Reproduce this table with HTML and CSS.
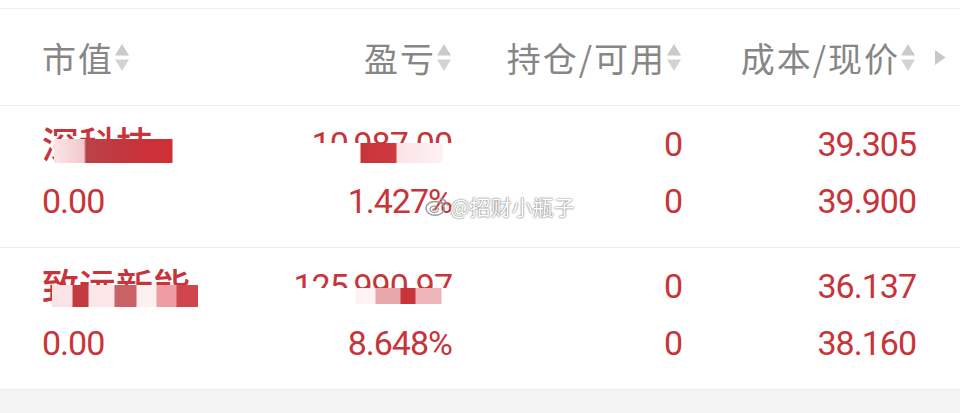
FILE: index.html
```html
<!DOCTYPE html>
<html lang="zh-CN">
<head>
    <meta charset="UTF-8">
    <meta name="viewport" content="width=device-width, initial-scale=1.0">
    <title>持仓</title>
    <link rel="stylesheet" href="styles.css">
</head>
<body>
    <div class="topbar"></div>
    <div class="holdings">
        <div class="row head">
            <div class="cell left"><span class="label">市值</span><svg class="sort" viewBox="0 0 16 29"><path d="M8 1 L15 12.5 L1 12.5 Z" fill="#cacaca"/><path d="M1 16.5 L15 16.5 L8 28 Z" fill="#d3d3d3"/></svg></div>
            <div class="cell"><span class="label">盈亏</span><svg class="sort" viewBox="0 0 16 29"><path d="M8 1 L15 12.5 L1 12.5 Z" fill="#cacaca"/><path d="M1 16.5 L15 16.5 L8 28 Z" fill="#d3d3d3"/></svg></div>
            <div class="cell"><span class="label">持仓/可用</span><svg class="sort" viewBox="0 0 16 29"><path d="M8 1 L15 12.5 L1 12.5 Z" fill="#cacaca"/><path d="M1 16.5 L15 16.5 L8 28 Z" fill="#d3d3d3"/></svg></div>
            <div class="cell"><span class="label">成本/现价</span><svg class="sort" viewBox="0 0 16 29"><path d="M8 1 L15 12.5 L1 12.5 Z" fill="#cacaca"/><path d="M1 16.5 L15 16.5 L8 28 Z" fill="#d3d3d3"/></svg></div>
            <div class="cell more"><svg viewBox="0 0 12 17"><path d="M1 1 L11.5 8.5 L1 16 Z" fill="#c8c8c8"/></svg></div>
        </div>

        <div class="row stock">
            <div class="cell left">
                <span class="name">深科技<span class="mask m1"></span></span>
                <span class="num">0.00</span>
            </div>
            <div class="cell">
                <span class="num">10,987.00<span class="mask m2"></span></span>
                <span class="num">1.427%</span>
            </div>
            <div class="cell">
                <span class="num">0</span>
                <span class="num">0</span>
            </div>
            <div class="cell">
                <span class="num">39.305</span>
                <span class="num">39.900</span>
            </div>
            <div class="cell"></div>
        </div>

        <div class="row stock">
            <div class="cell left">
                <span class="name">致远新能<span class="mask m3"></span></span>
                <span class="num">0.00</span>
            </div>
            <div class="cell">
                <span class="num">125,990.97<span class="mask m4"></span></span>
                <span class="num">8.648%</span>
            </div>
            <div class="cell">
                <span class="num">0</span>
                <span class="num">0</span>
            </div>
            <div class="cell">
                <span class="num">36.137</span>
                <span class="num">38.160</span>
            </div>
            <div class="cell"></div>
        </div>

        <div class="watermark">
            <svg class="weibo" viewBox="0 0 26 22"><ellipse cx="11" cy="13" rx="10" ry="7.5" fill="none" stroke="#9a9a9a" stroke-width="1.6"/><ellipse cx="10" cy="14" rx="4.5" ry="3.5" fill="none" stroke="#9a9a9a" stroke-width="1.4"/><circle cx="9" cy="14.5" r="1.3" fill="#9a9a9a"/><path d="M16 3 A7 7 0 0 1 24 10" fill="none" stroke="#9a9a9a" stroke-width="1.6"/><path d="M16 6.5 A3.5 3.5 0 0 1 20.5 10" fill="none" stroke="#9a9a9a" stroke-width="1.4"/></svg>
            <span>@招财小瓶子</span>
        </div>
    </div>
    <div class="footer"></div>
</body>
</html>
```

FILE: styles.css
```css
body {
    margin: 0;
    padding: 0;
    background-color: #ffffff;
    font-family: Roboto, "Noto Sans CJK SC", sans-serif;
    overflow: hidden;
}
.topbar {
    height: 8px;
    border-bottom: 1px solid #efefef;
}
.holdings {
    position: relative;
}
.row {
    display: grid;
    grid-template-columns: 160px 250px 230px 234px 1fr;
    padding-left: 42px;
    border-bottom: 1px solid #ececec;
}
.cell {
    display: flex;
    flex-direction: column;
    align-items: flex-end;
}
.cell.left {
    align-items: flex-start;
}
.head {
    height: 96px;
}
.head .cell {
    flex-direction: row;
    align-items: center;
    justify-content: flex-end;
    font-family: "Noto Sans CJK SC", sans-serif;
    font-size: 34px;
    color: #868686;
}
.head .cell.left {
    justify-content: flex-start;
}
.label {
    letter-spacing: 2px;
}
.sort {
    width: 16px;
    height: 29px;
}
.head .more {
    justify-content: flex-start;
    padding-left: 18px;
}
.more svg {
    width: 12px;
    height: 17px;
}
.stock {
    height: 142px;
    padding-top: 10px;
    box-sizing: border-box;
}
.num, .name {
    position: relative;
    display: block;
    height: 57px;
    line-height: 57px;
    font-size: 34px;
    letter-spacing: -1px;
    color: #c8343a;
}
.name {
    font-family: "Noto Sans CJK SC", sans-serif;
    font-size: 37px;
    font-weight: 500;
    letter-spacing: 0;
    line-height: 54px;
}
.mask {
    position: absolute;
    display: block;
}
.m1 {
    left: 12px;
    top: 23px;
    width: 128px;
    height: 24px;
    background: linear-gradient(to right, #fbe4e6 0, #f3c9cc 30px, #b9434a 32px, #c6343b 75px, #cf2f35 118px, #ffffff 119px);
}
.m2 {
    left: -10px;
    top: 27px;
    width: 170px;
    height: 20px;
    background: linear-gradient(to right, #ffffff 0, #ffffff 58px, #c9343a 59px, #cf3a3f 94px, #fbe3e5 95px, #fdf1f2 140px, #ffffff 141px);
}
.m3 {
    left: 10px;
    top: 27px;
    width: 146px;
    height: 22px;
    background: linear-gradient(to right, #fbe2e4 0, #fbe2e4 20px, #c33a40 21px, #c33a40 36px, #fce6e8 37px, #fce6e8 62px, #c96166 63px, #c96166 84px, #fdf0f1 85px, #fdf0f1 104px, #ee9ea2 105px, #ee9ea2 124px, #cf454b 125px, #cf454b 146px);
}
.m4 {
    left: 0;
    top: 30px;
    width: 160px;
    height: 16px;
    background: linear-gradient(to right, #ffffff 0, #ffffff 62px, #fdf3f4 63px, #fdf3f4 82px, #e8a7aa 83px, #e8a7aa 107px, #c7353b 108px, #c7353b 122px, #eeb5b8 123px, #eeb5b8 148px, #ffffff 149px);
}
.watermark {
    position: absolute;
    left: 425px;
    top: 182px;
    display: flex;
    align-items: center;
    font-family: "Noto Sans CJK SC", sans-serif;
    font-size: 21px;
    color: #ffffff;
    text-shadow: 0 0 2px #6f6f6f, 0 0 1px #8a8a8a;
}
.weibo {
    width: 24px;
    height: 21px;
    margin-right: 1px;
}
.footer {
    height: 30px;
    background-color: #f4f4f4;
}
```
